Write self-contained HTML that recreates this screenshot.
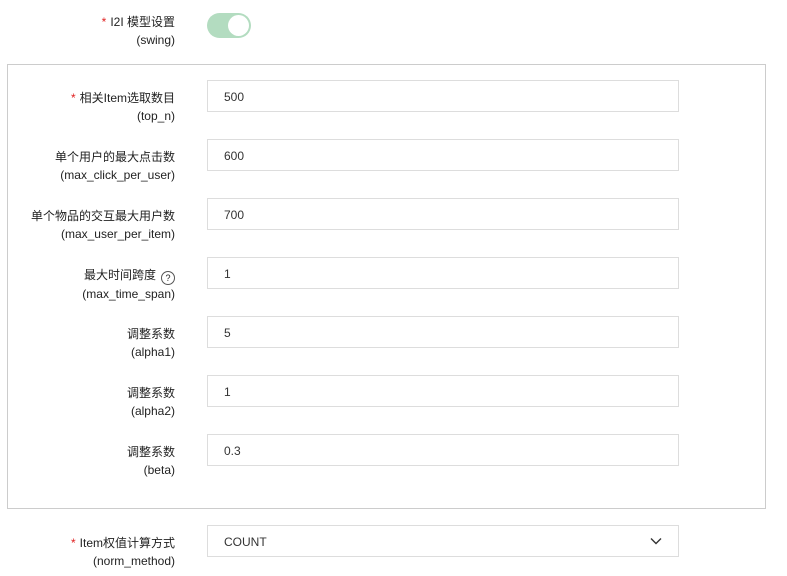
<!DOCTYPE html>
<html><head><meta charset="utf-8"><style>
body{margin:0;width:787px;height:576px;background:#fff;font-family:"Liberation Sans","Noto Sans CJK SC",sans-serif;font-size:12px;color:#333;position:relative;overflow:hidden}
.lab{position:absolute;right:612px;text-align:right;line-height:18px;white-space:nowrap;color:#222}
.req{color:#e02020;margin-right:4px}
.inp{position:absolute;left:207px;border:1px solid #ddd;line-height:32px;padding-left:16px;box-sizing:border-box;width:472px;height:32px}
.box{position:absolute;left:7px;top:64px;width:757px;height:443px;border:1px solid #ccc}
.tog{position:absolute;left:207px;top:13px;width:44px;height:25px;border-radius:13px;background:#b3dcc0}
.tog::after{content:"";position:absolute;right:2px;top:2px;width:21px;height:21px;border-radius:50%;background:#fff}
.q{display:inline-block;width:12px;height:12px;border:1px solid #555;border-radius:50%;font-size:9px;line-height:12px;text-align:center;margin-left:5px;vertical-align:-2px}
</style></head><body>
<div class="lab" style="top:13px"><span class="req">*</span>I2I 模型设置<br>(swing)</div>
<div class="tog"></div>
<div class="box"></div>
<div class="lab" style="top:89px"><span class="req">*</span>相关Item选取数目<br>(top_n)</div>
<div class="inp" style="top:80px">500</div>
<div class="lab" style="top:148px">单个用户的最大点击数<br>(max_click_per_user)</div>
<div class="inp" style="top:139px">600</div>
<div class="lab" style="top:207px">单个物品的交互最大用户数<br>(max_user_per_item)</div>
<div class="inp" style="top:198px">700</div>
<div class="lab" style="top:266px">最大时间跨度<span class="q">?</span><br>(max_time_span)</div>
<div class="inp" style="top:257px">1</div>
<div class="lab" style="top:325px">调整系数<br>(alpha1)</div>
<div class="inp" style="top:316px">5</div>
<div class="lab" style="top:384px">调整系数<br>(alpha2)</div>
<div class="inp" style="top:375px">1</div>
<div class="lab" style="top:443px">调整系数<br>(beta)</div>
<div class="inp" style="top:434px">0.3</div>
<div class="lab" style="top:534px"><span class="req">*</span>Item权值计算方式<br>(norm_method)</div>
<div class="inp" style="top:525px">COUNT
<svg style="position:absolute;right:16px;top:11px" width="12" height="8" viewBox="0 0 12 8"><path d="M1 1.5L6 6.5L11 1.5" fill="none" stroke="#333" stroke-width="1.4"/></svg></div>
</body></html>
